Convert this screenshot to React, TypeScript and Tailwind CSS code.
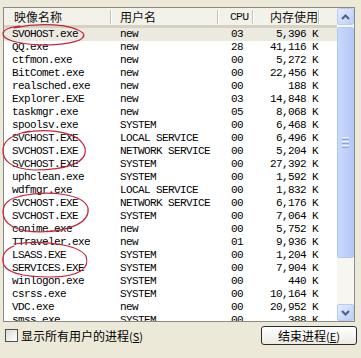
import type { ReactNode } from 'react';

type Proc = { name: string; user: string; cpu: string; mem: string };

const procs: Proc[] = [
  { name: 'SVOHOST.exe', user: 'new', cpu: '03', mem: '5,396' },
  { name: 'QQ.exe', user: 'new', cpu: '28', mem: '41,116' },
  { name: 'ctfmon.exe', user: 'new', cpu: '00', mem: '5,272' },
  { name: 'BitComet.exe', user: 'new', cpu: '00', mem: '22,456' },
  { name: 'realsched.exe', user: 'new', cpu: '00', mem: '188' },
  { name: 'Explorer.EXE', user: 'new', cpu: '03', mem: '14,848' },
  { name: 'taskmgr.exe', user: 'new', cpu: '05', mem: '8,068' },
  { name: 'spoolsv.exe', user: 'SYSTEM', cpu: '00', mem: '6,468' },
  { name: 'SVCHOST.EXE', user: 'LOCAL SERVICE', cpu: '00', mem: '6,496' },
  { name: 'SVCHOST.EXE', user: 'NETWORK SERVICE', cpu: '00', mem: '5,204' },
  { name: 'SVCHOST.EXE', user: 'SYSTEM', cpu: '00', mem: '27,392' },
  { name: 'uphclean.exe', user: 'SYSTEM', cpu: '00', mem: '1,592' },
  { name: 'wdfmgr.exe', user: 'LOCAL SERVICE', cpu: '00', mem: '1,832' },
  { name: 'SVCHOST.EXE', user: 'NETWORK SERVICE', cpu: '00', mem: '6,176' },
  { name: 'SVCHOST.EXE', user: 'SYSTEM', cpu: '00', mem: '7,064' },
  { name: 'conime.exe', user: 'new', cpu: '00', mem: '5,752' },
  { name: 'TTraveler.exe', user: 'new', cpu: '01', mem: '9,936' },
  { name: 'LSASS.EXE', user: 'SYSTEM', cpu: '00', mem: '1,204' },
  { name: 'SERVICES.EXE', user: 'SYSTEM', cpu: '00', mem: '7,904' },
  { name: 'winlogon.exe', user: 'SYSTEM', cpu: '00', mem: '440' },
  { name: 'csrss.exe', user: 'SYSTEM', cpu: '00', mem: '10,164' },
  { name: 'VDC.exe', user: 'new', cpu: '00', mem: '20,952' },
  { name: 'smss.exe', user: 'SYSTEM', cpu: '00', mem: '388' },
];

const mono = "font-['Liberation_Mono','DejaVu_Sans_Mono',monospace] text-[11px] tracking-[-0.6px]";
const cjk = "font-['Noto_Sans_CJK_SC','Noto_Sans',sans-serif] text-[12px]";

function HeaderCell({ className, children, last }: { className: string; children: ReactNode; last?: boolean }) {
  return (
    <div className={`flex h-full items-center ${className}`}>
      <div className="flex-1">{children}</div>
      {!last && <div className="h-[14px] w-[2px] border-l border-[#c7c5b2] border-r border-r-white" />}
    </div>
  );
}

function Arrow({ up }: { up?: boolean }) {
  return (
    <svg width="9" height="6" viewBox="0 0 9 6">
      <path d={up ? 'M1 5 L4.5 1.5 L8 5' : 'M1 1 L4.5 4.5 L8 1'} fill="none" stroke="#4d6185" strokeWidth="2" />
    </svg>
  );
}

function ScrollButton({ up }: { up?: boolean }) {
  return (
    <div className="grid h-[17px] w-[17px] place-items-center rounded-[2px] border border-[#b9cbf3] bg-gradient-to-br from-[#e3ebfd] to-[#bccdf8]">
      <Arrow up={up} />
    </div>
  );
}

export default function App() {
  return (
    <div className="relative h-[358px] w-[361px] overflow-hidden bg-[#ece9d8] pt-[7px] pl-[3px] text-black">
      {/* list view */}
      <div className="flex h-[315px] w-[352px] border border-[#8c8b83] bg-white">
        <div className="flex min-w-0 flex-1 flex-col overflow-hidden">
          <div className="flex h-[20px] shrink-0 border-b-[3px] border-[#d6d2c2] bg-[#f3f2ea] text-[#111]">
            <HeaderCell className={`w-[108px] pl-[10px] ${cjk}`}>映像名称</HeaderCell>
            <HeaderCell className={`w-[107px] pl-[8px] ${cjk}`}>用户名</HeaderCell>
            <HeaderCell className={`w-[35px] pl-[11px] font-['Liberation_Mono',monospace] text-[11.5px] tracking-[-0.8px]`}>CPU</HeaderCell>
            <HeaderCell className={`w-[71px] pr-[5px] text-right ${cjk}`}>内存使用</HeaderCell>
            <HeaderCell className="flex-1" last>{null}</HeaderCell>
          </div>
          <div className={`flex flex-col ${mono}`}>
            {procs.map((p, i) => (
              <div
                key={i}
                className={`flex h-[13px] shrink-0 items-center leading-[13px] ${i === 0 ? 'bg-[#ebe9e0]' : ''}`}
              >
                <div className="w-[108px] pl-[8px] whitespace-nowrap">{p.name}</div>
                <div className="w-[107px] pl-[8px] whitespace-nowrap">{p.user}</div>
                <div className="w-[35px] pl-[12px]">{p.cpu}</div>
                <div className="w-[71px] pr-[7px] text-right whitespace-pre">{`${p.mem} K`}</div>
              </div>
            ))}
          </div>
        </div>
        {/* scrollbar */}
        <div className="flex w-[17px] shrink-0 flex-col bg-[#f7f6f0]">
          <ScrollButton up />
          <div className="flex-1 pt-[2px]">
            <div className="flex h-[231px] flex-col items-center justify-center gap-[1px] rounded-[2px] border border-[#b4c7f2] bg-gradient-to-r from-[#c9d8fc] to-[#b5c8f6]">
              <div className="h-[1px] w-[7px] bg-[#eef3fe]" />
              <div className="h-[1px] w-[7px] bg-[#8ea6dd]" />
              <div className="h-[1px] w-[7px] bg-[#eef3fe]" />
              <div className="h-[1px] w-[7px] bg-[#8ea6dd]" />
              <div className="h-[1px] w-[7px] bg-[#eef3fe]" />
              <div className="h-[1px] w-[7px] bg-[#8ea6dd]" />
            </div>
          </div>
          <ScrollButton />
        </div>
      </div>

      {/* bottom controls */}
      <div className="mt-[4px] flex items-center pr-[4px]">
        <label className={`flex items-center gap-[3px] pl-[2px] ${cjk}`}>
          <span className="h-[13px] w-[13px] border border-[#4b5058] bg-gradient-to-br from-[#dcdbd3] to-white" />
          <span>
            显示所有用户的进程
            <span className="text-[11px]">
              (<span className="underline">S</span>)
            </span>
          </span>
        </label>
        <button
          type="button"
          className={`ml-auto h-[19px] w-[96px] rounded-[3px] border border-[#2b2b2b] bg-gradient-to-b from-white to-[#ecebe4] leading-none ${cjk}`}
        >
          结束进程
          <span className="text-[11px]">
            (<span className="underline">E</span>)
          </span>
        </button>
      </div>

      {/* red hand-drawn annotations */}
      <svg className="pointer-events-none absolute left-0 top-0" width="361" height="358" viewBox="0 0 361 358">
        <g fill="none" stroke="#c0283c" strokeWidth="1.2" strokeLinecap="round">
          <path d="M14 28 C40 22 72 24 83 33 C88 40 70 45 42 45 C18 44 2 40 3 33 C4 29 10 27 20 26" />
          <path d="M22 133 C52 127 80 133 85 148 C88 163 66 170 34 170 C12 169 2 161 3 149 C4 139 14 134 30 131" />
          <path d="M20 196 C50 190 84 194 88 208 C90 222 72 231 40 232 C16 232 3 224 3 212 C3 203 10 198 22 196" />
          <path d="M14 244 C42 240 78 244 86 256 C90 268 80 277 50 277 C22 277 4 272 3 262 C2 254 6 249 14 246" />
        </g>
      </svg>
    </div>
  );
}
